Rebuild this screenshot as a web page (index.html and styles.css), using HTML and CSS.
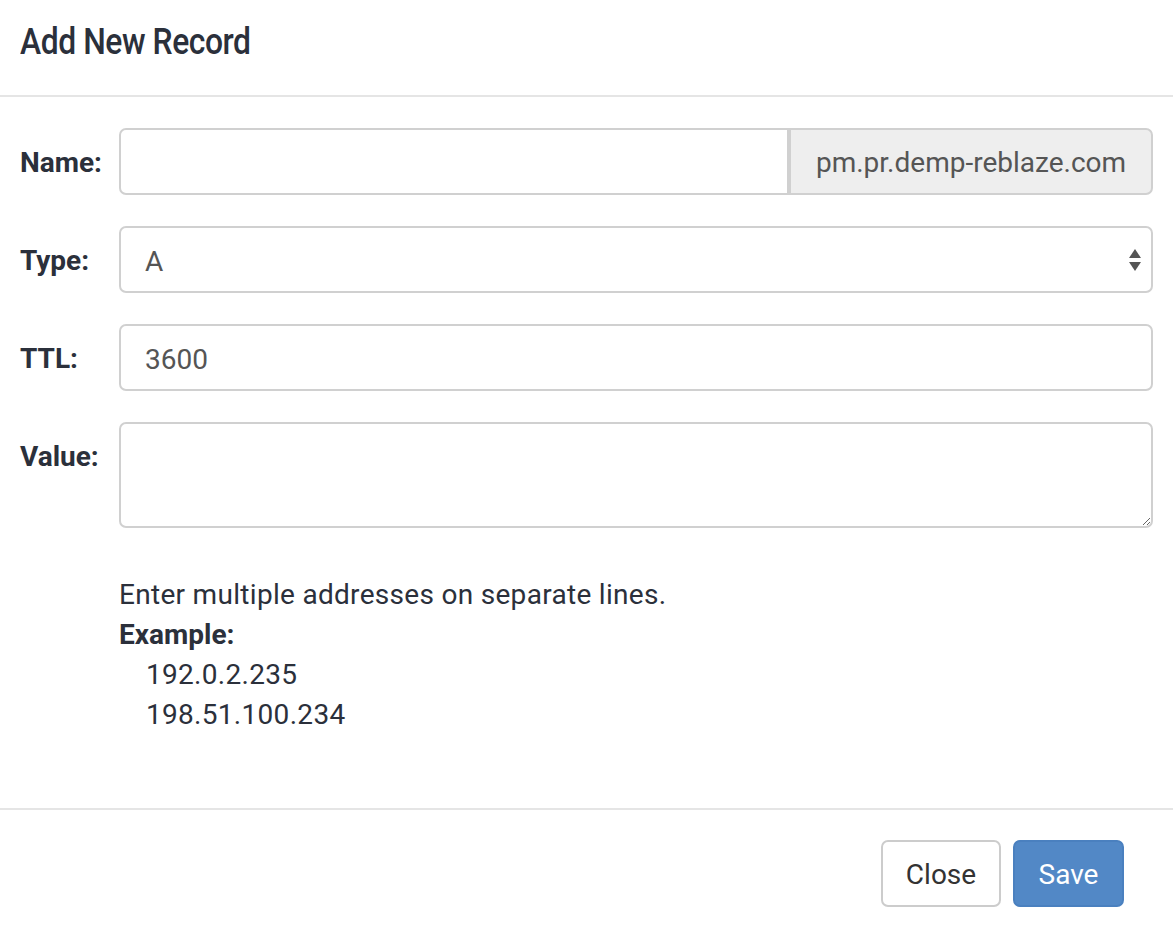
FILE: index.html
```html
<!DOCTYPE html>
<html>
<head>
<meta charset="utf-8">
<link rel="stylesheet" href="styles.css">
</head>
<body>
<div class="modal">
  <div class="modal-header">
    <h4 class="modal-title">Add New Record</h4>
  </div>
  <div class="modal-body">
    <div class="form-row">
      <label class="form-label">Name:</label>
      <div class="input-group">
        <input class="form-control grouped" type="text">
        <span class="addon">pm.pr.demp-reblaze.com</span>
      </div>
    </div>
    <div class="form-row">
      <label class="form-label">Type:</label>
      <select class="form-control select"><option>A</option></select>
    </div>
    <div class="form-row">
      <label class="form-label">TTL:</label>
      <input class="form-control" type="text" value="3600">
    </div>
    <div class="form-row">
      <label class="form-label">Value:</label>
      <textarea class="form-control textarea"></textarea>
    </div>
    <div class="help">
      <div>Enter multiple addresses on separate lines.</div>
      <div class="help-bold">Example:</div>
      <div class="indent">192.0.2.235</div>
      <div class="indent">198.51.100.234</div>
    </div>
  </div>
  <div class="modal-footer">
    <button class="btn btn-default">Close</button>
    <button class="btn btn-primary">Save</button>
  </div>
</div>
</body>
</html>
```
FILE: styles.css
```css
* { box-sizing: border-box; }
html, body { margin: 0; padding: 0; background: #fff; }
body {
  font-family: Roboto, "Liberation Sans", sans-serif;
  font-size: 28px;
  line-height: 40px;
  color: #2b303b;
}
.modal { width: 1173px; }
.modal-header {
  padding: 20px 20px 0 20px;
  height: 97px;
  border-bottom: 2px solid #e5e5e5;
}
.modal-title {
  margin: 0;
  font-size: 37px;
  font-weight: 500;
  line-height: 44px;
  letter-spacing: -0.5px;
  color: #2b303b;
  display: inline-block;
  transform: scaleX(0.86);
  transform-origin: left center;
}
.modal-body { padding: 31px 20px 0 20px; height: 711px; }
.form-row {
  display: grid;
  grid-template-columns: 99px 1fr;
  margin-bottom: 31px;
}
.form-label {
  font-weight: 700;
  padding-top: 15px;
  color: #2b303b;
}
.form-control {
  display: block;
  width: 100%;
  height: 67px;
  padding: 4px 24px 0 24px;
  font-family: Roboto, "Liberation Sans", sans-serif;
  font-size: 28px;
  color: #555;
  background: #fff;
  border: 2px solid #d0d0d0;
  border-radius: 7px;
  outline: none;
}
.input-group { display: flex; }
.form-control.grouped {
  flex: 1;
  border-radius: 7px 0 0 7px;
}
.addon {
  width: 364px;
  height: 67px;
  padding-top: 2px;
  display: flex;
  align-items: center;
  justify-content: center;
  background: #eee;
  color: #555;
  border: 2px solid #d0d0d0;
  border-radius: 0 7px 7px 0;
}
.select {
  appearance: none;
  -webkit-appearance: none;
  background-image: url("data:image/svg+xml;utf8,<svg xmlns='http://www.w3.org/2000/svg' width='12' height='24' viewBox='0 0 12 24'><path d='M6 1 L12 10 L0 10 Z' fill='%23555'/><path d='M0 14 L12 14 L6 23 Z' fill='%23555'/></svg>");
  background-repeat: no-repeat;
  background-position: right 10px center;
}
.textarea {
  height: 106px;
  padding: 12px 24px;
  resize: vertical;
}
.help { padding-left: 99px; margin-top: 47px; letter-spacing: 0.3px; }
.help-bold { font-weight: 700; letter-spacing: 0; }
.indent { padding-left: 27px; }
.modal-footer {
  border-top: 2px solid #e5e5e5;
  padding: 30px 49px 0 0;
  display: flex;
  justify-content: flex-end;
  gap: 12px;
}
.btn {
  height: 67px;
  padding: 2px 0 0 0;
  font-family: Roboto, "Liberation Sans", sans-serif;
  font-size: 28px;
  border-radius: 7px;
  cursor: pointer;
}
.btn-default {
  background: #fff;
  border: 2px solid #ccc;
  color: #333;
  width: 120px;
}
.btn-primary {
  background: #5288c6;
  border: 2px solid #4a80bf;
  color: #fff;
  width: 111px;
}
```
